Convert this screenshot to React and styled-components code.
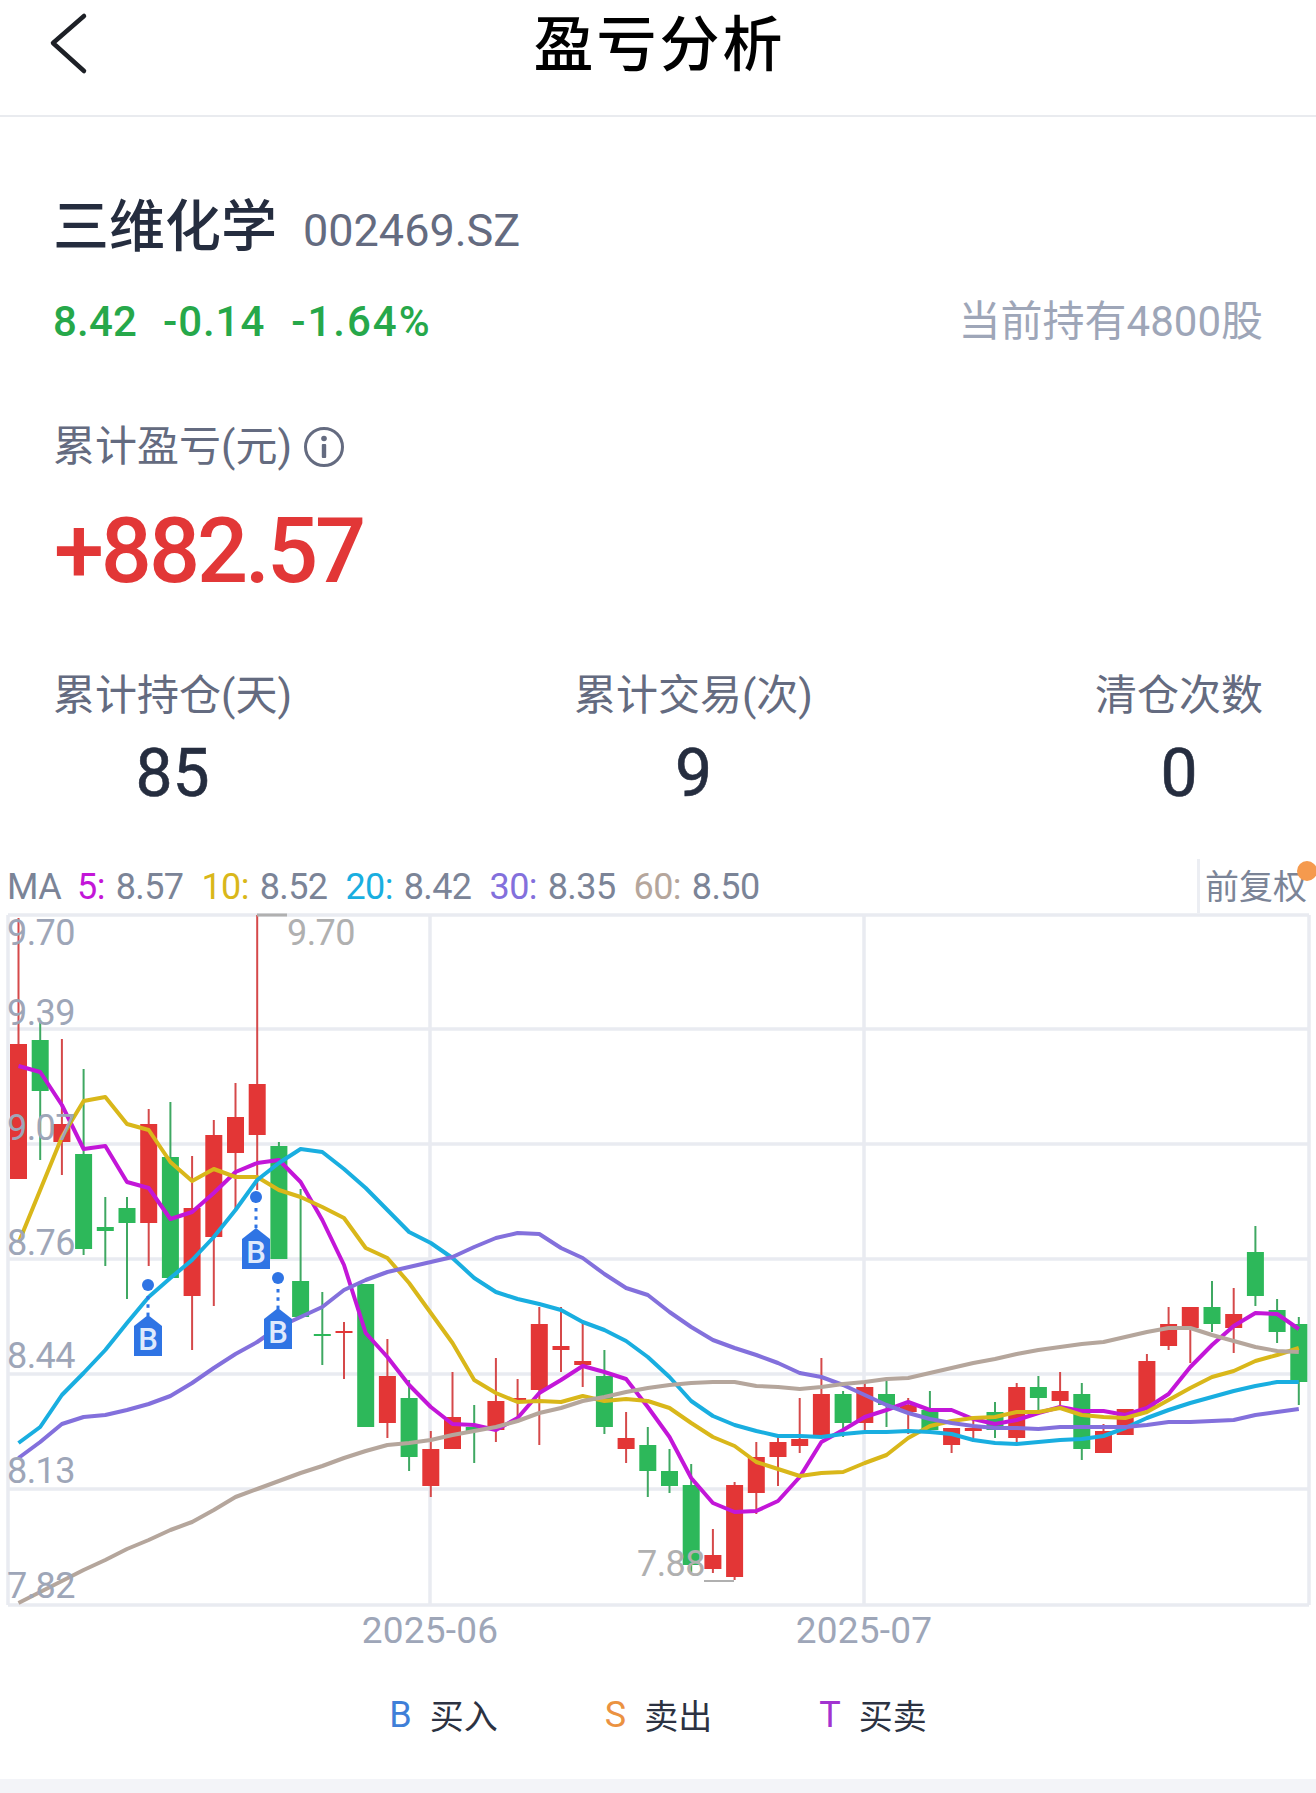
import React from 'react';
import styled, { createGlobalStyle } from 'styled-components';

const FONT = `Roboto, "Noto Sans CJK SC", sans-serif`;

const GlobalStyle = createGlobalStyle`
  html, body {
    margin: 0;
    padding: 0;
    background: #fff;
  }
  body {
    font-family: ${FONT};
    overflow-x: hidden;
  }
`;

const Page = styled.div`
  width: 1316px;
  height: 1793px;
  display: flex;
  flex-direction: column;
  background: #fff;
  overflow: hidden;
`;

const Header = styled.header`
  height: 115px;
  flex: none;
  display: flex;
  align-items: center;
  justify-content: center;
  position: relative;
  border-bottom: 2px solid #e9ebef;
`;

const BackIcon = styled.svg`
  position: absolute;
  left: 48px;
  top: 10px;
`;

const Title = styled.h1`
  margin: 0 0 35px 3px;
  font: 500 60px/80px "Noto Sans CJK SC", sans-serif;
  letter-spacing: 3px;
  color: #000;
`;

const Summary = styled.section`
  padding: 75px 53px 0 53px;
`;

const NameRow = styled.div`
  display: flex;
  align-items: baseline;
  gap: 26px;
  height: 60px;
`;

const StockName = styled.div`
  font: 500 56px/60px "Noto Sans CJK SC", sans-serif;
  color: #252d3f;
`;

const StockCode = styled.div`
  font: 400 45px/60px Roboto, sans-serif;
  color: #646b80;
`;

const QuoteRow = styled.div`
  display: flex;
  justify-content: space-between;
  align-items: center;
  margin-top: 45px;
  height: 50px;
`;

const Quote = styled.div`
  display: flex;
  gap: 26px;
  font: 500 42px/50px Roboto, sans-serif;
  color: #26a84a;
`;

const QuoteItem = styled.span`
  letter-spacing: ${p => p.$spacing}px;
`;

const Holding = styled.div`
  font: 400 42px/50px ${FONT};
  color: #9ea6b8;
`;

const ProfitLabel = styled.div`
  display: flex;
  align-items: center;
  gap: 11px;
  margin-top: 75px;
  font: 400 42px/50px ${FONT};
  color: #646b80;
`;

const ProfitValue = styled.div`
  margin-top: 30px;
  padding-left: 1px;
  font: 500 90px/100px Roboto, sans-serif;
  letter-spacing: -3.1px;
  color: #e23737;
`;

const StatRow = styled.div`
  display: flex;
  justify-content: space-between;
  margin-top: 69px;
`;

const Stat = styled.div`
  display: flex;
  flex-direction: column;
  align-items: center;
`;

const StatLabel = styled.div`
  font: 400 42px/50px ${FONT};
  color: #646b80;
`;

const StatValue = styled.div`
  margin-top: 15px;
  font: 400 66px/76px Roboto, sans-serif;
  color: #252d3f;
  -webkit-text-stroke: 0.6px #252d3f;
`;

const MaBar = styled.div`
  height: 54px;
  margin-top: 47px;
  flex: none;
  display: flex;
  align-items: stretch;
  justify-content: space-between;
  padding-left: 7px;
  position: relative;
`;

const MaList = styled.div`
  display: flex;
  align-items: center;
  gap: 18px;
  padding-top: 2px;
  font: 400 36px/38px Roboto, sans-serif;
  letter-spacing: -0.6px;
  color: #7b8497;
`;

const MaName = styled.span`
  margin-right: -2px;
`;

const MaItem = styled.span`
  white-space: pre;
`;

const MaKey = styled.span`
  margin-right: 2.5px;
  color: ${p => p.$color};
`;

const Adjust = styled.div`
  width: 119px;
  padding: 8px 0 0 5px;
  box-sizing: border-box;
  border-left: 3px solid #eceef3;
  font: 400 34px/40px ${FONT};
  color: #7b8497;
  white-space: nowrap;
`;

const AdjustDot = styled.span`
  position: absolute;
  right: -1px;
  top: 2px;
  width: 20px;
  height: 20px;
  border-radius: 50%;
  background: #f59a4e;
`;

const ChartSvg = styled.svg`
  display: block;
  flex: none;
`;

const AxisText = styled.text`
  font: 400 36px Roboto, sans-serif;
  letter-spacing: -0.6px;
  fill: ${p => p.$color || '#9ea6b8'};
`;

const DateText = styled.text`
  font: 400 37px Roboto, sans-serif;
  letter-spacing: 0.2px;
  fill: #9ea6b8;
  text-anchor: middle;
`;

const MarkerLetter = styled.text`
  font: 500 31px Roboto, sans-serif;
  fill: #dfeafc;
  text-anchor: middle;
`;

const Legend = styled.div`
  display: flex;
  justify-content: center;
  gap: 107px;
  margin-top: 35px;
  height: 40px;
  flex: none;
`;

const LegendItem = styled.div`
  display: flex;
  align-items: center;
  gap: 18px;
  font: 400 34px/40px "Noto Sans CJK SC", sans-serif;
  color: #2c3242;
`;

const LegendKey = styled.span`
  font: 400 36px/40px Roboto, sans-serif;
  color: ${p => p.$color};
`;

const BottomBand = styled.div`
  margin-top: 44px;
  flex: 1;
  background: #f3f4f8;
`;

const R = '#e33636';
const G = '#2db85a';

// [colour, body top, body bottom, wick top, wick bottom], page pixels
const candles = [
  [R, 1044, 1179, 918, 1179], [G, 1040, 1091, 1020, 1160], [R, 1124, 1142, 1039, 1175], [G, 1154, 1249, 1069, 1255],
  [G, 1227, 1231, 1197, 1266], [G, 1208, 1223, 1197, 1299], [R, 1124, 1223, 1109, 1266], [G, 1157, 1278, 1102, 1278],
  [R, 1208, 1296, 1156, 1350], [R, 1135, 1237, 1120, 1306], [R, 1117, 1153, 1083, 1210], [R, 1084, 1135, 915, 1190],
  [G, 1146, 1259, 1142, 1259], [G, 1281, 1317, 1189, 1317], [G, 1334, 1336, 1292, 1365], [R, 1331, 1333, 1322, 1379],
  [G, 1284, 1427, 1284, 1427], [R, 1376, 1423, 1339, 1438], [G, 1398, 1457, 1380, 1471], [R, 1449, 1486, 1431, 1497],
  [R, 1417, 1449, 1372, 1449], [G, 1427, 1431, 1405, 1463], [R, 1401, 1430, 1358, 1442], [R, 1398, 1400, 1379, 1418],
  [R, 1324, 1390, 1307, 1445], [R, 1346, 1350, 1307, 1372], [R, 1361, 1365, 1323, 1387], [G, 1376, 1427, 1350, 1434],
  [R, 1438, 1449, 1412, 1463], [G, 1445, 1471, 1427, 1497], [G, 1471, 1486, 1449, 1493], [G, 1485, 1565, 1464, 1572],
  [R, 1555, 1569, 1529, 1573], [R, 1485, 1577, 1482, 1580], [R, 1457, 1493, 1442, 1514], [R, 1442, 1457, 1437, 1486],
  [R, 1439, 1446, 1398, 1453], [R, 1394, 1435, 1358, 1435], [G, 1394, 1423, 1391, 1437], [R, 1387, 1423, 1382, 1430],
  [G, 1394, 1405, 1381, 1427], [R, 1405, 1412, 1398, 1434], [G, 1410, 1430, 1391, 1434], [R, 1428, 1445, 1428, 1453],
  [R, 1428, 1431, 1420, 1442], [G, 1412, 1430, 1402, 1438], [R, 1387, 1438, 1383, 1443], [G, 1387, 1398, 1376, 1410],
  [R, 1391, 1401, 1372, 1405], [G, 1394, 1449, 1383, 1460], [R, 1431, 1453, 1424, 1453], [R, 1409, 1435, 1409, 1435],
  [R, 1361, 1409, 1354, 1409], [R, 1324, 1346, 1307, 1350], [R, 1307, 1328, 1307, 1363], [G, 1307, 1324, 1281, 1332],
  [R, 1314, 1328, 1288, 1353], [G, 1252, 1296, 1226, 1306], [G, 1310, 1332, 1299, 1343], [G, 1324, 1382, 1317, 1405],
];

const ma5 = [1066, 1072, 1105, 1149, 1146, 1182, 1188, 1219, 1212, 1193, 1172, 1163, 1160, 1182, 1220, 1265, 1333, 1357, 1385, 1407, 1424, 1425, 1430, 1418, 1393, 1380, 1366, 1372, 1379, 1407, 1437, 1478, 1503, 1512, 1511, 1501, 1477, 1442, 1430, 1417, 1410, 1402, 1410, 1410, 1419, 1424, 1420, 1413, 1407, 1411, 1411, 1415, 1408, 1394, 1367, 1345, 1326, 1313, 1314, 1329];
const ma10 = [1243, 1190, 1137, 1101, 1097, 1124, 1130, 1162, 1181, 1169, 1177, 1177, 1190, 1197, 1207, 1218, 1248, 1258, 1283, 1313, 1343, 1380, 1393, 1402, 1401, 1402, 1396, 1401, 1399, 1401, 1408, 1423, 1437, 1446, 1462, 1469, 1476, 1473, 1472, 1463, 1455, 1438, 1426, 1421, 1418, 1417, 1412, 1412, 1408, 1415, 1417, 1418, 1412, 1400, 1388, 1377, 1371, 1361, 1355, 1348];
const ma20 = [1443, 1427, 1395, 1373, 1350, 1323, 1297, 1278, 1260, 1237, 1210, 1180, 1163, 1149, 1152, 1169, 1188, 1210, 1232, 1243, 1258, 1278, 1292, 1299, 1304, 1310, 1322, 1330, 1341, 1357, 1377, 1401, 1416, 1425, 1431, 1436, 1436, 1437, 1434, 1432, 1432, 1431, 1432, 1434, 1440, 1443, 1444, 1442, 1440, 1439, 1436, 1428, 1418, 1410, 1403, 1397, 1391, 1386, 1382, 1382];
const ma30 = [1458, 1442, 1424, 1417, 1415, 1410, 1404, 1396, 1383, 1368, 1354, 1342, 1327, 1317, 1307, 1290, 1280, 1272, 1267, 1262, 1257, 1247, 1238, 1233, 1234, 1248, 1258, 1274, 1288, 1295, 1312, 1327, 1340, 1348, 1355, 1363, 1373, 1377, 1385, 1395, 1405, 1413, 1419, 1423, 1426, 1428, 1428, 1429, 1427, 1427, 1427, 1427, 1425, 1422, 1422, 1421, 1420, 1415, 1412, 1409];
const ma60 = [1603, 1592, 1581, 1570, 1560, 1549, 1540, 1530, 1522, 1510, 1497, 1489, 1481, 1473, 1466, 1458, 1451, 1445, 1443, 1440, 1435, 1431, 1427, 1421, 1413, 1408, 1401, 1397, 1392, 1388, 1385, 1383, 1382, 1382, 1386, 1387, 1389, 1387, 1384, 1382, 1379, 1378, 1373, 1368, 1363, 1359, 1354, 1350, 1347, 1344, 1342, 1337, 1332, 1328, 1328, 1335, 1341, 1347, 1351, 1352];

const maLines = [
  { data: ma5, color: '#c316d8' },
  { data: ma10, color: '#d9b71a' },
  { data: ma20, color: '#19aee0' },
  { data: ma30, color: '#8370dc' },
  { data: ma60, color: '#b5a69c' },
];

const maLegend = [
  { key: '5:', value: '8.57', color: '#c316d8' },
  { key: '10:', value: '8.52', color: '#d9b71a' },
  { key: '20:', value: '8.42', color: '#19aee0' },
  { key: '30:', value: '8.35', color: '#8370dc' },
  { key: '60:', value: '8.50', color: '#b5a69c' },
];

const gridRows = [915, 1029, 1144, 1259, 1374, 1489, 1605];
const gridCols = [8, 430, 864, 1309];
const axisLabels = [
  ['9.70', 945], ['9.39', 1025], ['9.07', 1140], ['8.76', 1255], ['8.44', 1368], ['8.13', 1483], ['7.82', 1598],
];
const markers = [
  { x: 148, dotY: 1285, tagY: 1315 },
  { x: 256, dotY: 1197, tagY: 1228 },
  { x: 278, dotY: 1278, tagY: 1308 },
];

const xAt = i => 18.5 + 21.7 * i;

function Marker({ x, dotY, tagY }) {
  const dots = [];
  for (let y = dotY + 11; y < tagY - 1; y += 8.3) dots.push(y);
  return (
    <g>
      <circle cx={x} cy={dotY} r="6" fill="#2f74e4" />
      {dots.map(y => <rect key={y} x={x - 1.5} y={y} width="3" height="3.5" fill="#2f74e4" />)}
      <path
        d={`M${x} ${tagY} L${x + 14} ${tagY + 11} V${tagY + 41} H${x - 14} V${tagY + 11} Z`}
        fill="#2f74e4"
      />
      <MarkerLetter x={x} y={tagY + 35}>B</MarkerLetter>
    </g>
  );
}

function KLine() {
  return (
    <ChartSvg width="1316" height="747" viewBox="0 913 1316 747">
      {gridRows.map(y => <line key={y} x1="8" x2="1309" y1={y} y2={y} stroke="#e9ebf1" strokeWidth="3.5" />)}
      {gridCols.map(x => <line key={x} x1={x} x2={x} y1="915" y2="1605" stroke="#e9ebf1" strokeWidth="3.5" />)}

      {candles.map(([color, top, bottom, wickTop, wickBottom], i) => (
        <g key={i}>
          <line x1={xAt(i)} x2={xAt(i)} y1={wickTop} y2={wickBottom} stroke={color === R ? '#d5494a' : '#3fa862'} strokeWidth="2" />
          <rect x={xAt(i) - 8.5} y={top} width="17" height={bottom - top} fill={color} />
        </g>
      ))}

      {maLines.map(({ data, color }) => (
        <polyline
          key={color}
          points={data.map((y, i) => `${xAt(i)},${y}`).join(' ')}
          fill="none"
          stroke={color}
          strokeWidth="4"
          strokeLinejoin="round"
        />
      ))}

      {markers.map(m => <Marker key={m.x} {...m} />)}

      {axisLabels.map(([text, y]) => <AxisText key={text} x="7" y={y}>{text}</AxisText>)}

      <line x1="257" x2="287" y1="915" y2="915" stroke="#b0b0b0" strokeWidth="3" />
      <AxisText x="287" y="945" $color="#b0b0b0">9.70</AxisText>
      <line x1="704" x2="734" y1="1581" y2="1581" stroke="#b0b0b0" strokeWidth="2" />
      <AxisText x="637" y="1576" $color="#b0b0b0">7.88</AxisText>

      <DateText x="430" y="1643">2025-06</DateText>
      <DateText x="864" y="1643">2025-07</DateText>
    </ChartSvg>
  );
}

export default function App() {
  return (
    <Page>
      <GlobalStyle />
      <Header>
        <BackIcon width="44" height="66" viewBox="0 0 44 66" fill="none">
          <path d="M36 6 L5 33 L36 61" stroke="#1d2026" strokeWidth="4.5" strokeLinecap="round" strokeLinejoin="round" />
        </BackIcon>
        <Title>盈亏分析</Title>
      </Header>

      <Summary>
        <NameRow>
          <StockName>三维化学</StockName>
          <StockCode>002469.SZ</StockCode>
        </NameRow>
        <QuoteRow>
          <Quote>
            <QuoteItem $spacing={0.2}>8.42</QuoteItem>
            <QuoteItem $spacing={0.9}>-0.14</QuoteItem>
            <QuoteItem $spacing={2}>-1.64%</QuoteItem>
          </Quote>
          <Holding>当前持有4800股</Holding>
        </QuoteRow>
        <ProfitLabel>
          累计盈亏(元)
          <svg width="42" height="42" viewBox="0 0 42 42" fill="none">
            <circle cx="21" cy="21" r="18.5" stroke="#646b80" strokeWidth="3" />
            <circle cx="21" cy="12.5" r="2.8" fill="#646b80" />
            <rect x="18.8" y="18" width="4.4" height="14" rx="1" fill="#646b80" />
          </svg>
        </ProfitLabel>
        <ProfitValue>+882.57</ProfitValue>
        <StatRow>
          <Stat>
            <StatLabel>累计持仓(天)</StatLabel>
            <StatValue>85</StatValue>
          </Stat>
          <Stat>
            <StatLabel>累计交易(次)</StatLabel>
            <StatValue>9</StatValue>
          </Stat>
          <Stat>
            <StatLabel>清仓次数</StatLabel>
            <StatValue>0</StatValue>
          </Stat>
        </StatRow>
      </Summary>

      <MaBar>
        <MaList>
          <MaName>MA</MaName>
          {maLegend.map(m => (
            <MaItem key={m.key}>
              <MaKey $color={m.color}>{m.key}</MaKey> {m.value}
            </MaItem>
          ))}
        </MaList>
        <Adjust>前复权</Adjust>
        <AdjustDot />
      </MaBar>

      <KLine />

      <Legend>
        <LegendItem>
          <LegendKey $color="#3f7fd8">B</LegendKey>
          买入
        </LegendItem>
        <LegendItem>
          <LegendKey $color="#eb9241">S</LegendKey>
          卖出
        </LegendItem>
        <LegendItem>
          <LegendKey $color="#a233d0">T</LegendKey>
          买卖
        </LegendItem>
      </Legend>
      <BottomBand />
    </Page>
  );
}
